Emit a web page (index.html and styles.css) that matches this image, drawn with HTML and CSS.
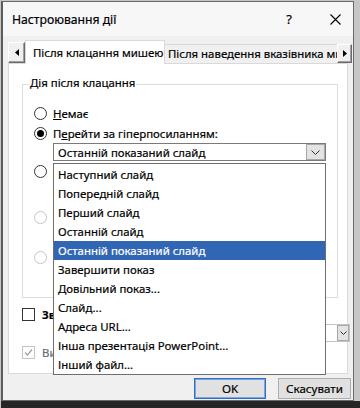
FILE: index.html
```html
<!DOCTYPE html>
<html lang="uk">
<head>
<meta charset="utf-8">
<title>Настроювання дії</title>
<link rel="stylesheet" href="styles.css">
</head>
<body>
<div class="desk">
  <div class="dialog">
    <div class="titlebar">
      <span class="title">Настроювання дії</span>
      <span class="help">?</span>
      <svg class="close" width="11" height="11" viewBox="0 0 11 11"><path d="M0.5 0.5L10.5 10.5M10.5 0.5L0.5 10.5" stroke="#000" stroke-width="1.1" fill="none"/></svg>
    </div>
    <div class="tabs">
      <div class="scroll scroll-left"><svg width="4" height="7" viewBox="0 0 4 7"><path d="M4 0L0 3.5L4 7Z" fill="#000"/></svg></div>
      <div class="tab active">Після клацання мишею</div>
      <div class="tab inactive">Після наведення вказівника миші</div>
      <div class="scroll scroll-right"><svg width="4" height="7" viewBox="0 0 4 7"><path d="M0 0L4 3.5L0 7Z" fill="#000"/></svg></div>
    </div>
    <div class="panel">
      <div class="group">
        <span class="legend">Дія після клацання</span>
        <div class="opt"><span class="radio"></span><span><u>Н</u>емає</span></div>
        <div class="opt"><span class="radio on"></span><span>П<u>е</u>рейти за гіперпосиланням:</span></div>
        <div class="combo"><span class="combo-text">Останній показаний слайд</span><span class="combo-btn"><svg width="9" height="5" viewBox="0 0 9 5"><path d="M0.5 0.5L4.5 4.5L8.5 0.5" stroke="#333" fill="none"/></svg></span></div>
        <div class="opt"><span class="radio"></span></div>
        <div class="combo hidden-combo"></div>
        <div class="opt gap"><span class="radio dis"></span></div>
        <div class="combo hidden-combo"></div>
        <div class="opt"><span class="radio dis"></span></div>
        <div class="combo hidden-combo"></div>
      </div>
      <div class="check-row"><span class="check"></span><b class="cut">Зв</b></div>
      <div class="combo sound"><span class="combo-text">[Н</span><span class="combo-btn small"><svg width="7" height="4" viewBox="0 0 7 4"><path d="M0.5 0.5L3.5 3.5L6.5 0.5" stroke="#333" fill="none"/></svg></span></div>
      <div class="check-row disabled"><span class="check dis"><svg width="11" height="11" viewBox="0 0 11 11"><path d="M2 5.5L4.5 8L9 2.5" stroke="#a0a0a0" stroke-width="1.2" fill="none"/></svg></span><span class="cut">Ви</span></div>
      <ul class="dropdown">
        <li>Наступний слайд</li>
        <li>Попередній слайд</li>
        <li>Перший слайд</li>
        <li>Останній слайд</li>
        <li class="sel">Останній показаний слайд</li>
        <li>Завершити показ</li>
        <li>Довільний показ...</li>
        <li>Слайд...</li>
        <li>Адреса URL...</li>
        <li>Інша презентація PowerPoint...</li>
        <li>Інший файл...</li>
      </ul>
    </div>
    <div class="buttons">
      <button class="btn default">OK</button>
      <button class="btn">Скасувати</button>
    </div>
  </div>
  <div class="floor"></div>
</div>
</body>
</html>
```

FILE: styles.css
```css
* { box-sizing: border-box; }
html, body { margin: 0; padding: 0; }
body {
  width: 360px;
  height: 408px;
  overflow: hidden;
  background: #c6c6c6;
  font-family: "Noto Sans", "Open Sans", sans-serif;
  font-size: 11.4px;
  color: #000;
  -webkit-text-stroke: 0.2px currentColor;
}
.desk {
  height: 408px;
  display: flex;
  flex-direction: column;
  padding: 1px 0 0 1px;
}
.dialog {
  width: 353px;
  height: 400px;
  flex: none;
  border: 1px solid #6a6a6a;
  border-left: 2px solid #5c5c5c;
  background: #f0f0f0;
  display: flex;
  flex-direction: column;
}
.floor {
  flex: 1;
  background: #262626;
}
.titlebar {
  height: 34px;
  display: flex;
  align-items: center;
  padding-left: 9px;
  background: #f7f7f7;
}
.title { flex: 1; font-size: 12.2px; }
.help {
  width: 16px;
  text-align: center;
  font-size: 13px;
  margin-right: 33px;
}
.close { margin-right: 12px; }

.tabs {
  height: 27px;
  display: flex;
  align-items: flex-end;
  padding-left: 5px;
}
.scroll {
  display: flex;
  align-items: center;
  justify-content: center;
  background: #f0f0f0;
  border: 1px solid;
  border-color: #ffffff #6a6a6a #6a6a6a #ffffff;
  box-shadow: inset -1px -1px 0 #a0a0a0;
}
.scroll-left { width: 17px; height: 21px; }
.scroll-right { width: 15px; height: 19px; margin-left: -1px; position: relative; z-index: 2; }
.tab {
  border: 1px solid #d9d9d9;
  border-bottom: none;
  white-space: nowrap;
  overflow: hidden;
}
.tab.active {
  width: 140px;
  height: 24px;
  margin-bottom: -1px;
  background: #fff;
  padding: 4px 0 0 7px;
  position: relative;
  z-index: 1;
}
.tab.inactive {
  width: 173px;
  height: 19px;
  background: #f0f0f0;
  border-left: none;
  padding: 1px 0 0 3px;
}

.panel {
  margin: 0 5px 0 5px;
  height: 311px;
  flex: none;
  background: #fff;
  border: 1px solid #d9d9d9;
  position: relative;
  padding: 20px 0 0 13px;
}
.group {
  width: 316px;
  height: 214px;
  border: 1px solid #dcdcdc;
  position: relative;
  padding: 18px 0 0 11px;
}
.legend {
  position: absolute;
  left: 6px;
  top: -10px;
  background: #fff;
  padding: 0 1px;
}
.opt {
  height: 20px;
  display: flex;
  align-items: center;
  gap: 6px;
  white-space: nowrap;
}
.opt.gap { margin-top: 6px; }
.radio {
  width: 13px;
  height: 13px;
  border: 1px solid #333;
  border-radius: 50%;
  background: #fff;
  display: flex;
  align-items: center;
  justify-content: center;
  flex: none;
}
.radio.on::after {
  content: "";
  width: 7px;
  height: 7px;
  border-radius: 50%;
  background: #000;
}
.radio.dis { border-color: #c4c4c4; }

.combo {
  margin-left: 19px;
  width: 273px;
  height: 18px;
  border: 1px solid #7a7a7a;
  display: flex;
  align-items: center;
  background: #fff;
  white-space: nowrap;
}
.hidden-combo { margin-top: 2px; border-color: #c4c4c4; }
.combo-text { padding-left: 4px; flex: 1; overflow: hidden; }
.combo-btn {
  width: 19px;
  height: 16px;
  background: #e3e3e3;
  border: 1px solid #a8a8a8;
  display: flex;
  align-items: center;
  justify-content: center;
  flex: none;
}
.combo-btn.small { width: 12px; }

.check-row {
  height: 20px;
  margin-top: 6px;
  display: flex;
  align-items: center;
  gap: 7px;
  white-space: nowrap;
}
.check-row.disabled { margin-top: 0; color: #6d6d6d; }
.check {
  width: 13px;
  height: 13px;
  border: 1px solid #333;
  background: #fff;
  flex: none;
  display: flex;
  align-items: center;
  justify-content: center;
}
.check.dis { border-color: #c4c4c4; }
.combo.sound {
  margin-left: 33px;
  width: 295px;
  height: 18px;
  border-color: #c4c4c4;
}

.dropdown {
  position: absolute;
  left: 44px;
  top: 99px;
  width: 273px;
  height: 212px;
  margin: 0;
  padding: 1px 0 0 0;
  list-style: none;
  background: #fff;
  border: 1px solid #6e6e6e;
  z-index: 3;
}
.dropdown li {
  height: 19px;
  line-height: 19px;
  padding-left: 4px;
  white-space: nowrap;
}
.dropdown li.sel {
  background: #3166b5;
  color: #fff;
}

.buttons {
  flex: 1;
  display: flex;
  justify-content: flex-end;
  align-items: flex-start;
  gap: 12px;
  padding: 4px 2px 0 0;
}
.btn {
  font-family: inherit;
  font-size: 11.6px;
  height: 21px;
  width: 73px;
  background: #e1e1e1;
  border: 1px solid #adadad;
  color: #000;
  padding: 0;
  -webkit-text-stroke: 0.2px #000;
}
.btn.default {
  width: 72px;
  border: 1px solid #2f6fc5;
  box-shadow: inset 0 0 0 1px #7ea6dd;
}
```
